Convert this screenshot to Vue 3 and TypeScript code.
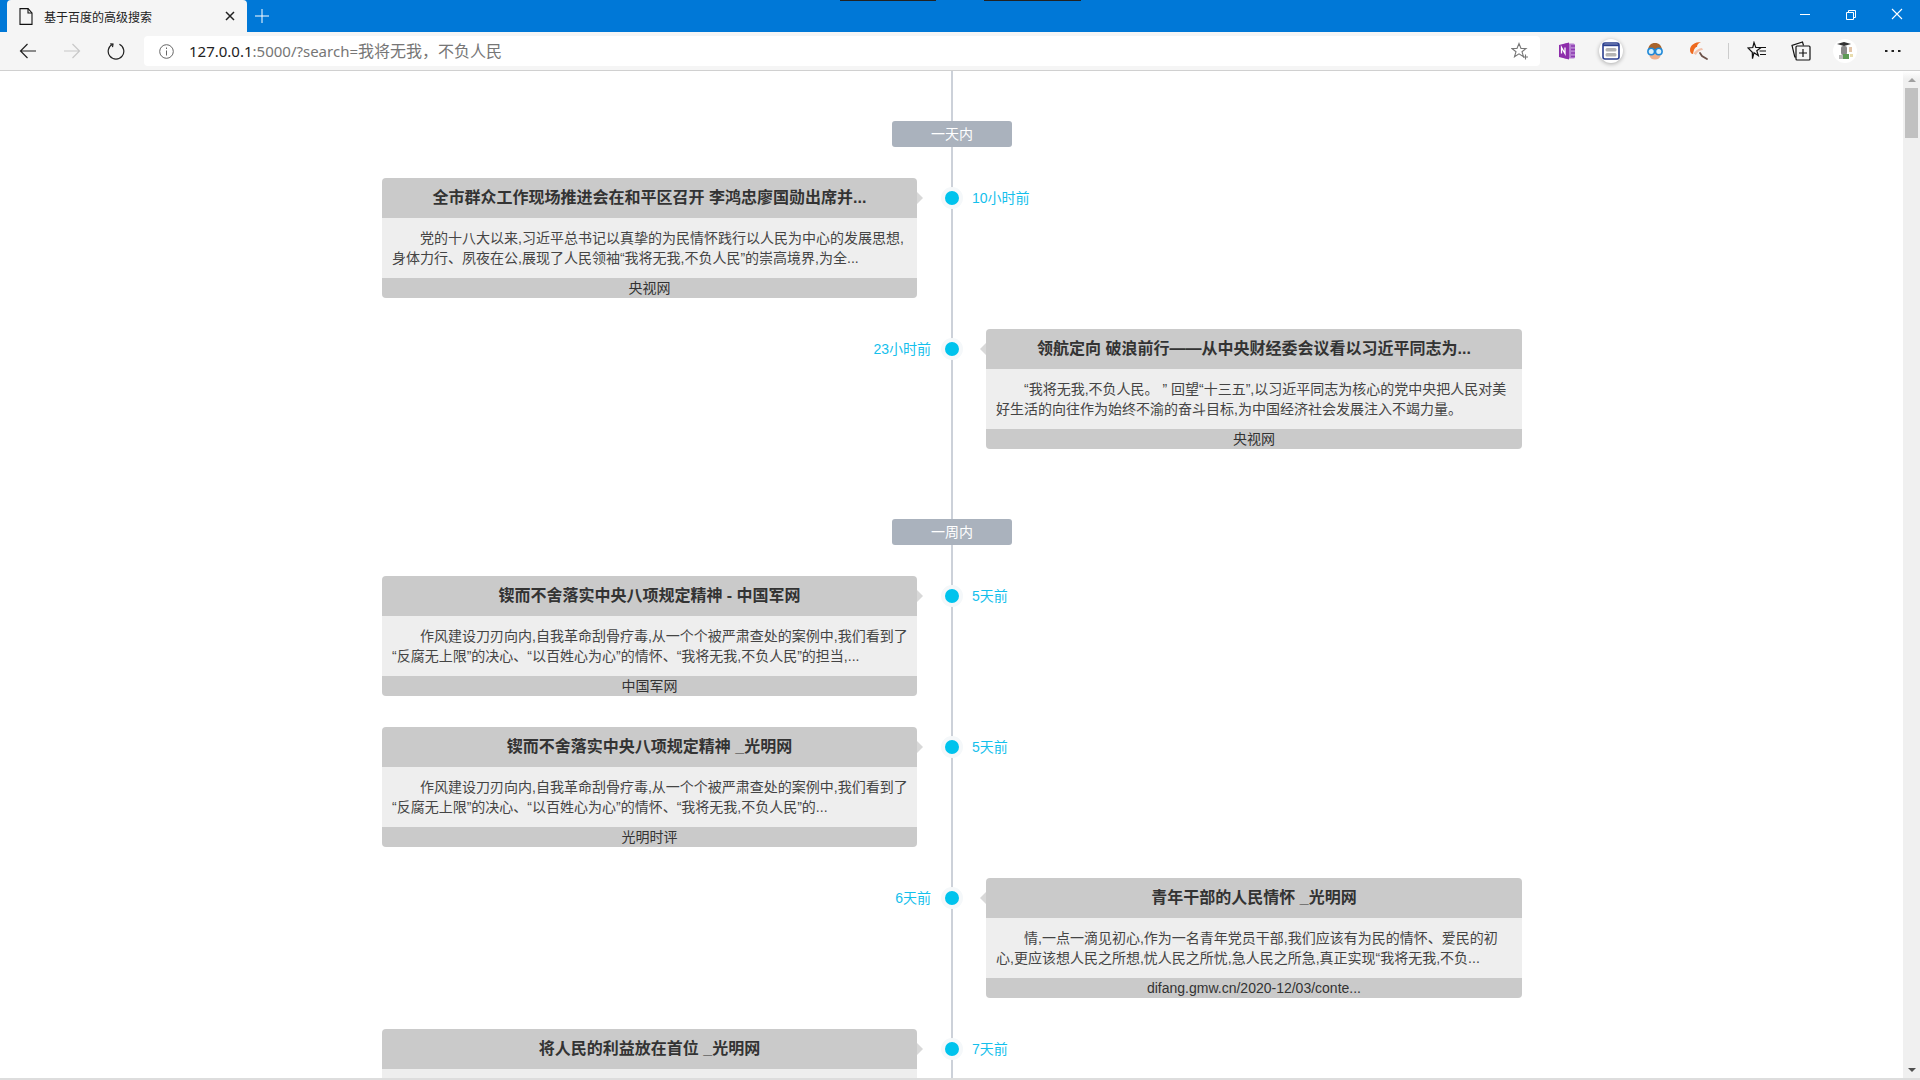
<script setup lang="ts">
interface NewsItem {
  side: 'left' | 'right';
  title: string;
  summary: string;
  source: string;
  time: string;
}

interface Period {
  label: string;
  items: NewsItem[];
}

// 摘要は元の画面と同じ位置で改行する
const periods: Period[] = [
  {
    label: '一天内',
    items: [
      {
        side: 'left',
        title: '全市群众工作现场推进会在和平区召开 李鸿忠廖国勋出席并...',
        summary: '党的十八大以来,习近平总书记以真挚的为民情怀践行以人民为中心的发展思想,\n身体力行、夙夜在公,展现了人民领袖“我将无我,不负人民”的崇高境界,为全...',
        source: '央视网',
        time: '10小时前',
      },
      {
        side: 'right',
        title: '领航定向 破浪前行——从中央财经委会议看以习近平同志为...',
        summary: '“我将无我,不负人民。\u00a0” 回望“十三五”,以习近平同志为核心的党中央把人民对美\n好生活的向往作为始终不渝的奋斗目标,为中国经济社会发展注入不竭力量。',
        source: '央视网',
        time: '23小时前',
      },
    ],
  },
  {
    label: '一周内',
    items: [
      {
        side: 'left',
        title: '锲而不舍落实中央八项规定精神 - 中国军网',
        summary: '作风建设刀刃向内,自我革命刮骨疗毒,从一个个被严肃查处的案例中,我们看到了\n“反腐无上限”的决心、“以百姓心为心”的情怀、“我将无我,不负人民”的担当,...',
        source: '中国军网',
        time: '5天前',
      },
      {
        side: 'left',
        title: '锲而不舍落实中央八项规定精神 _光明网',
        summary: '作风建设刀刃向内,自我革命刮骨疗毒,从一个个被严肃查处的案例中,我们看到了\n“反腐无上限”的决心、“以百姓心为心”的情怀、“我将无我,不负人民”的...',
        source: '光明时评',
        time: '5天前',
      },
      {
        side: 'right',
        title: '青年干部的人民情怀 _光明网',
        summary: '情,一点一滴见初心,作为一名青年党员干部,我们应该有为民的情怀、爱民的初\n心,更应该想人民之所想,忧人民之所忧,急人民之所急,真正实现“我将无我,不负...',
        source: 'difang.gmw.cn/2020-12/03/conte...',
        time: '6天前',
      },
      {
        side: 'left',
        title: '将人民的利益放在首位 _光明网',
        summary: '',
        source: '',
        time: '7天前',
      },
    ],
  },
];
</script>

<template>
  <div class="window">
    <header class="titlebar">
      <div class="tab">
        <svg class="tab-icon" width="14" height="17" viewBox="0 0 14 17" fill="none" stroke="#111" stroke-width="1.100">
          <path d="M1 .6h8l4 4.400v11.400h-12z" />
          <path d="M9 .6v4.400h4" />
        </svg>
        <span class="tab-title">基于百度的高级搜索</span>
        <svg class="tab-close" width="10" height="10" viewBox="0 0 10 10" stroke="#222" stroke-width="1.500">
          <path d="M1 1l8 8M9 1l-8 8" />
        </svg>
      </div>
      <svg class="new-tab" width="14" height="14" viewBox="0 0 14 14" stroke="#fff" stroke-width="1">
        <path d="M7 0v14M0 7h14" />
      </svg>
      <div class="top-marks">
        <span class="top-mark"></span>
        <span class="top-mark top-mark--wide"></span>
      </div>
      <div class="window-controls">
        <svg width="46" height="32" viewBox="0 0 46 32" stroke="#fff" fill="none">
          <path d="M18 14.500h10" />
        </svg>
        <svg width="46" height="32" viewBox="0 0 46 32" stroke="#fff" fill="none">
          <path d="M18.500 12.500h7v7h-7zM20.500 12.500v-2h7v7h-2" />
        </svg>
        <svg width="46" height="32" viewBox="0 0 46 32" stroke="#fff" fill="none" stroke-width="1.100">
          <path d="M18 9l10 10M28 9l-10 10" />
        </svg>
      </div>
    </header>

    <div class="toolbar">
      <button class="nav-btn">
        <svg width="18" height="16" viewBox="0 0 18 16" fill="none" stroke="#222" stroke-width="1.200">
          <path d="M17 8H1.500M8.500 1l-7 7 7 7" />
        </svg>
      </button>
      <button class="nav-btn">
        <svg width="18" height="16" viewBox="0 0 18 16" fill="none" stroke="#c8c8c8" stroke-width="1.200">
          <path d="M1 8h15.500M9.500 1l7 7-7 7" />
        </svg>
      </button>
      <button class="nav-btn">
        <svg width="18" height="18" viewBox="0 0 18 18" fill="none" stroke="#222" stroke-width="1.200">
          <path d="M5.600 2.300a7.800 7.800 0 1 0 6.800 0" />
          <path d="M3.200 1.800l2.800.300-.500 3" />
        </svg>
      </button>
      <div class="address">
        <svg class="info-icon" width="15" height="15" viewBox="0 0 15 15" fill="none" stroke="#666">
          <circle cx="7.500" cy="7.500" r="6.800" />
          <path d="M7.500 6.500v5M7.500 3.500v1.500" />
        </svg>
        <span class="url"><span class="url-host">127.0.0.1</span>:5000/?search=<span class="url-query">我将无我&#xFF0C;不负人民</span></span>
        <svg class="star-icon" width="18" height="18" viewBox="0 0 18 18" fill="none" stroke="#777" stroke-width="1.100">
          <path d="M8 1.500l2 5h5l-4 3.200 1.500 5L8 11.800l-4.500 2.900 1.500-5-4-3.200h5z" />
          <path d="M14.500 12.500v5M12 15h5" />
        </svg>
      </div>
      <div class="extensions">
        <span class="ext">
          <svg width="18" height="18" viewBox="0 0 18 18">
            <rect x="6" y="1.500" width="11" height="15" rx="1.500" fill="#b57fd0" />
            <path d="M13 4h4M13 7.500h4M13 11h4M13 14.500h4" stroke="#8c3bb0" stroke-width="1.500" />
            <path d="M1 3l10-2.500v17L1 15z" fill="#8e2dab" />
            <path d="M3.500 11.500v-6l3.500 6v-6" fill="none" stroke="#fff" stroke-width="1.300" />
          </svg>
        </span>
        <span class="ext ext--active">
          <svg width="18" height="18" viewBox="0 0 18 18">
            <rect x="1" y="1" width="16" height="16" rx="2" fill="#fff" stroke="#2b3f8f" stroke-width="1.600" />
            <path d="M1 3.200h16" stroke="#2b3f8f" stroke-width="2" />
            <rect x="3.500" y="6" width="11" height="3.500" rx="1.500" fill="#b4b4b4" />
            <rect x="3.500" y="11" width="11" height="3.500" rx="1.500" fill="#b4b4b4" />
          </svg>
        </span>
        <span class="ext">
          <svg width="18" height="18" viewBox="0 0 18 18">
            <path d="M2 9c0-5.500 3-8 7-8s7 2.500 7 8z" fill="#a9642c" />
            <ellipse cx="9" cy="13.500" rx="5.500" ry="4" fill="#eeb08c" />
            <circle cx="5.200" cy="9.500" r="3.300" fill="#d8f0fb" stroke="#1e88d8" stroke-width="1.600" />
            <circle cx="12.800" cy="9.500" r="3.300" fill="#d8f0fb" stroke="#1e88d8" stroke-width="1.600" />
          </svg>
        </span>
        <span class="ext">
          <svg width="20" height="20" viewBox="0 0 20 20" fill="none">
            <path d="M1 9c0-5 5-8 11-8-3 1-4 3-4 5-2 0-3 2-4 7-2 0-3-2-3-4z" fill="#ee6a1f" />
            <path d="M4.500 12.500c2-3 5-5.500 8.500-5.500l1 2c-3 0-6 2-7 5z" fill="#f3c1aa" />
            <path d="M11 12l2 3 5 3" stroke="#6b5148" stroke-width="1.800" stroke-linecap="round" />
          </svg>
        </span>
        <span class="toolbar-sep"></span>
        <span class="ext">
          <svg width="20" height="20" viewBox="0 0 20 20" fill="none" stroke="#111" stroke-width="1.200">
            <path d="M7 1.500l1.800 5H14L9.800 9.800l1.500 4.800L7 11.700l-1.500 6-.2-6.500L1 7l4.800-.500z" />
            <path d="M11 6.500h8M12.500 10h6.500M13 13.500h6" />
          </svg>
        </span>
        <span class="ext">
          <svg width="20" height="20" viewBox="0 0 20 20" fill="none" stroke="#111" stroke-width="1.200">
            <path d="M5 16l-1.200 0L1 4.500 11.500 1l1 3.500" />
            <rect x="5" y="5" width="14" height="14" rx="1" fill="#f5f5f5" />
            <path d="M12 8v8M8 12h8" />
          </svg>
        </span>
        <span class="ext ext--active ext--flat">
          <svg width="20" height="20" viewBox="0 0 20 20">
            <path d="M2 3l7-2 7 2-7 2z" fill="#333" />
            <rect x="6" y="5" width="6" height="9" rx="2" fill="#8a8a8a" />
            <rect x="4" y="14" width="4" height="4" fill="#b9b9b9" />
            <rect x="8" y="13" width="6" height="5" fill="#5d9a55" />
            <rect x="14" y="6" width="3" height="5" fill="#e2c4a8" />
            <rect x="15" y="13" width="3" height="3" fill="#e8dcae" />
          </svg>
        </span>
        <span class="ext ext--more">
          <svg width="16" height="4" viewBox="0 0 16 4" fill="#222">
            <rect x="0" y="1" width="2.500" height="2" />
            <rect x="6.500" y="1" width="2.500" height="2" />
            <rect x="13" y="1" width="2.500" height="2" />
          </svg>
        </span>
      </div>
    </div>

    <div class="viewport">
      <main class="page">
        <div class="timeline">
          <section v-for="period in periods" :key="period.label" class="period">
            <div class="period-badge">{{ period.label }}</div>
            <article
              v-for="item in period.items"
              :key="item.title"
              class="entry"
            >
              <div class="slot">
                <div v-if="item.side === 'left'" class="card card--left">
                  <h3 class="card-title">{{ item.title }}</h3>
                  <p class="card-summary">{{ item.summary }}</p>
                  <div class="card-source">{{ item.source }}</div>
                </div>
                <div v-else class="time time--left">{{ item.time }}</div>
              </div>
              <div class="axis"><span class="dot"></span></div>
              <div class="slot">
                <div v-if="item.side === 'right'" class="card card--right">
                  <h3 class="card-title">{{ item.title }}</h3>
                  <p class="card-summary">{{ item.summary }}</p>
                  <div class="card-source">{{ item.source }}</div>
                </div>
                <div v-else class="time time--right">{{ item.time }}</div>
              </div>
            </article>
          </section>
        </div>
      </main>
      <aside class="scrollbar">
        <span class="arrow arrow--up"></span>
        <span class="thumb"></span>
        <span class="arrow arrow--down"></span>
      </aside>
    </div>

    <div class="bottom-strip"></div>
  </div>
</template>

<style scoped>
.window {
  display: flex;
  flex-direction: column;
  width: 1920px;
  height: 1080px;
  overflow: hidden;
  background: #fff;
  font-family: "Liberation Sans", "Noto Sans CJK SC", sans-serif;
  color: #333;
}

.titlebar {
  position: relative;
  display: flex;
  align-items: center;
  flex: none;
  height: 32px;
  padding-left: 7px;
  background: #0078d7;
}

.tab {
  display: flex;
  align-items: center;
  width: 240px;
  height: 32px;
  padding: 0 12px;
  box-sizing: border-box;
  border-radius: 4px 4px 0 0;
  background: #f5f5f5;
}

.tab-icon {
  flex: none;
}

.tab-title {
  margin-left: 11px;
  font-size: 12px;
  color: #222;
}

.tab-close {
  margin-left: auto;
}

.new-tab {
  margin-left: 8px;
}

.top-marks {
  position: absolute;
  top: 0;
  left: 840px;
  display: flex;
  gap: 48px;
}

.top-mark {
  width: 96px;
  height: 1px;
  background: #222;
}

.top-mark--wide {
  width: 97px;
}

.window-controls {
  display: flex;
  margin-left: auto;
}

.toolbar {
  display: flex;
  align-items: center;
  flex: none;
  height: 38px;
  border-bottom: 1px solid #d0d0d0;
  background: #f5f5f5;
}

.nav-btn {
  display: flex;
  align-items: center;
  justify-content: center;
  width: 44px;
  height: 38px;
  padding: 0;
  border: none;
  background: none;
}

.nav-btn:first-child {
  margin-left: 6px;
}

.address {
  display: flex;
  align-items: center;
  width: 1396px;
  height: 30px;
  margin-left: 6px;
  padding: 0 11px 0 15px;
  box-sizing: border-box;
  border-radius: 4px;
  background: #fff;
}

.info-icon {
  flex: none;
}

.url {
  margin-left: 15px;
  margin-bottom: 2px;
  font-family: "Noto Sans", "Noto Sans CJK SC", sans-serif;
  font-size: 15px;
  color: #767676;
}

.url-host {
  color: #222;
}

.url-query {
  font-size: 16px;
}

.star-icon {
  margin-left: auto;
}

.extensions {
  display: flex;
  align-items: center;
  margin-left: 5px;
}

.ext {
  display: flex;
  align-items: center;
  justify-content: center;
  width: 44px;
  height: 38px;
}

.ext--active::before {
  content: "";
  position: absolute;
  width: 24px;
  height: 24px;
  border-radius: 50%;
  background: #fff;
  box-shadow: 0 1px 4px rgba(0, 0, 0, 0.3);
}

.ext--flat::before {
  box-shadow: none;
}

.ext--more {
  margin-left: 4px;
}

.ext svg {
  position: relative;
}

.toolbar-sep {
  width: 1px;
  height: 16px;
  margin: 0 6px 0 7px;
  background: #ccc;
}

.viewport {
  display: flex;
  flex: 1;
  min-height: 0;
}

.page {
  flex: 1;
  min-width: 0;
  overflow: hidden;
}

.timeline {
  position: relative;
  width: 1140px;
  margin-left: 382px;
  padding-top: 50px;
}

.timeline::before {
  content: "";
  position: absolute;
  top: 0;
  bottom: 0;
  left: 569px;
  width: 2px;
  background: #ccd1d9;
}

.period {
  position: relative;
  padding-bottom: 39px;
}

.period-badge {
  width: 120px;
  height: 26px;
  margin: 0 0 31px 510px;
  border-radius: 3px;
  background: #aab2bd;
  color: #fff;
  font-size: 14px;
  line-height: 26px;
  text-align: center;
}

.entry {
  display: grid;
  grid-template-columns: 535px 69px 536px;
  margin-bottom: 31px;
}

.axis {
  display: flex;
  justify-content: center;
  align-items: center;
  height: 40px;
  padding-left: 1px;
}

.dot {
  width: 14px;
  height: 14px;
  border: 4px solid #f5f8fa;
  border-radius: 50%;
  background: #00c3ed;
}

.time {
  height: 40px;
  font-size: 14px;
  line-height: 40px;
  color: #14c0ec;
}

.time--left {
  margin-right: -14px;
  text-align: right;
}

.time--right {
  margin-left: -14px;
}

.card {
  position: relative;
  height: 120px;
  border-radius: 4px;
  background: #cacaca;
}

.card::after {
  content: "";
  position: absolute;
  top: 14px;
  border-top: 6px solid transparent;
  border-bottom: 6px solid transparent;
}

.card--left::after {
  left: 100%;
  border-left: 6px solid #d8d8d8;
}

.card--right::after {
  right: 100%;
  border-right: 6px solid #d8d8d8;
}

.card-title {
  height: 40px;
  margin: 0;
  font-size: 16px;
  font-weight: bold;
  line-height: 40px;
  text-align: center;
  color: #333;
}

.card-summary {
  height: 60px;
  margin: 0;
  padding: 10px;
  box-sizing: border-box;
  background: #eee;
  font-size: 14px;
  line-height: 20px;
  text-indent: 2em;
  white-space: pre;
  color: #444;
}

.card-source {
  height: 20px;
  font-size: 14px;
  line-height: 20px;
  text-align: center;
  color: #333;
}

.scrollbar {
  display: flex;
  flex-direction: column;
  align-items: center;
  flex: none;
  width: 17px;
  padding-top: 7px;
  box-sizing: border-box;
  background: linear-gradient(#fff 0, #f0f0f0 8px);
}

.thumb {
  width: 13px;
  height: 50px;
  margin-top: 6px;
  background: #c1c1c1;
}

.arrow {
  width: 0;
  height: 0;
  border-left: 4px solid transparent;
  border-right: 4px solid transparent;
}

.arrow--up {
  border-bottom: 4px solid #a0a0a0;
}

.arrow--down {
  margin-top: auto;
  margin-bottom: 6px;
  border-top: 4px solid #505050;
}

.bottom-strip {
  flex: none;
  height: 2px;
  background: #ddd;
}
</style>

<style>
html,
body {
  margin: 0;
  overflow: hidden;
}
</style>
